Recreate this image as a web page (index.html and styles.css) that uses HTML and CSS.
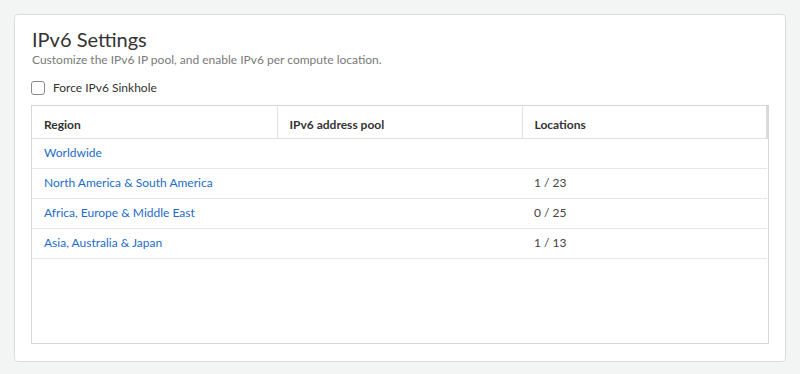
FILE: index.html
```html
<!DOCTYPE html>
<html lang="en">
<head>
<meta charset="utf-8">
<title>IPv6 Settings</title>
<link rel="stylesheet" href="styles.css">
</head>
<body>
<section class="card">
  <h1 class="title">IPv6 Settings</h1>
  <p class="subtitle">Customize the IPv6 IP pool, and enable IPv6 per compute location.</p>
  <label class="check">
    <span class="box"></span>
    <span>Force IPv6 Sinkhole</span>
  </label>
  <div class="table-wrap">
    <table class="grid">
      <thead>
        <tr>
          <th>Region</th>
          <th>IPv6 address pool</th>
          <th class="last">Locations</th>
        </tr>
      </thead>
      <tbody>
        <tr><td><a href="#">Worldwide</a></td><td></td><td></td></tr>
        <tr><td><a href="#">North America &amp; South America</a></td><td></td><td>1 / 23</td></tr>
        <tr><td><a href="#">Africa, Europe &amp; Middle East</a></td><td></td><td>0 / 25</td></tr>
        <tr><td><a href="#">Asia, Australia &amp; Japan</a></td><td></td><td>1 / 13</td></tr>
      </tbody>
    </table>
  </div>
</section>
</body>
</html>
```

FILE: styles.css
```css
* { box-sizing: border-box; }
html, body { margin: 0; padding: 0; }
body {
  background: #f3f4f4;
  font-family: Lato, "Open Sans", sans-serif;
  color: #333;
  padding: 14px 14px 12px;
}
.card {
  width: 772px;
  background: #fff;
  border: 1px solid #dcdcdc;
  border-radius: 4px;
  padding: 12px 16px 17px;
}
.title {
  margin: 0;
  font-size: 20px;
  line-height: 24px;
  font-weight: 400;
  color: #333;
  padding-left: 1px;
}
.subtitle {
  margin: 1px 0 0;
  font-size: 12px;
  line-height: 16px;
  color: #7a7a7a;
  padding-left: 1px;
}
.check {
  margin-top: 12px;
  display: flex;
  align-items: center;
  gap: 8px;
  font-size: 12px;
  line-height: 16px;
  color: #333;
  height: 16px;
}
.box {
  width: 14px;
  height: 14px;
  border: 1px solid #8a8a8a;
  border-radius: 3px;
  background: #fff;
}
.table-wrap {
  margin-top: 9px;
  height: 239px;
  border: 1px solid #d6d6d6;
}
.grid {
  width: 100%;
  border-collapse: collapse;
  table-layout: fixed;
  font-size: 12px;
}
.grid th {
  text-align: left;
  font-weight: 700;
  color: #333;
  line-height: 16px;
  height: 32px;
  padding: 11px 12px 4px;
  border-bottom: 1px solid #e2e2e2;
  border-right: 1px solid #e2e2e2;
}
.grid th.last { border-right: 2px solid #dadada; }
.grid td {
  line-height: 16px;
  height: 30px;
  padding: 6px 12px 7px;
  border-bottom: 1px solid #e6e6e6;
  color: #444;
}
.grid a {
  color: #1d6ccb;
  text-decoration: none;
}
```
